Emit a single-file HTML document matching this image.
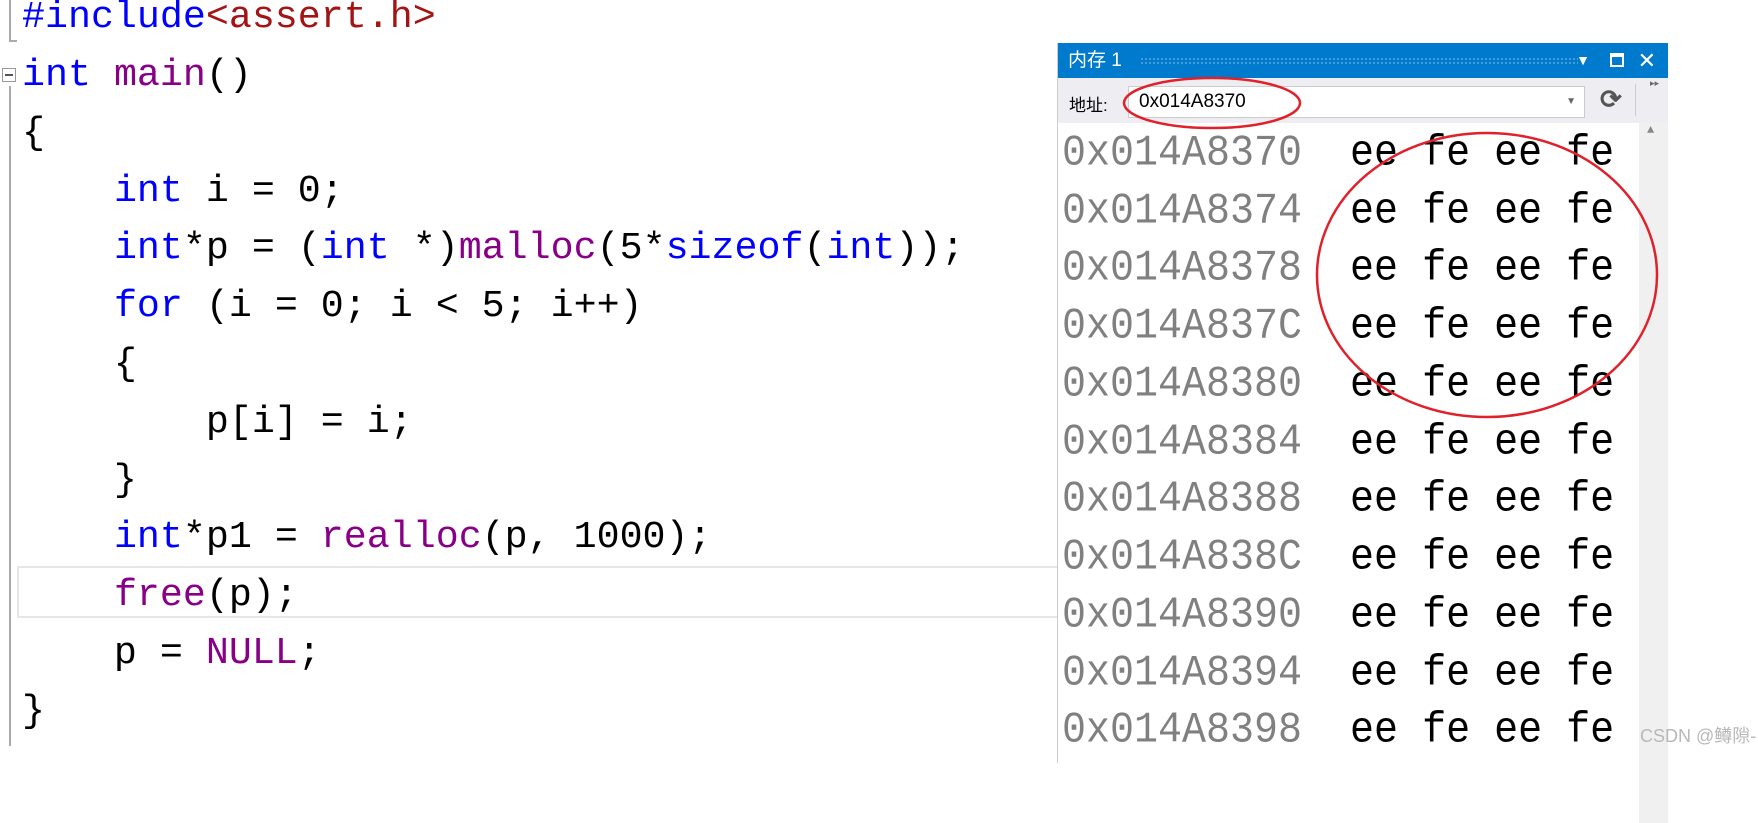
<!DOCTYPE html>
<html><head><meta charset="utf-8"><style>
body{margin:0;width:1758px;height:753px;overflow:hidden;background:#fff;position:relative;font-family:"Liberation Mono",monospace}
.l{position:absolute;left:22px;font-size:38.3px;line-height:58px;white-space:pre;color:#000}
.k{color:#0000ff}.f{color:#880088}.s{color:#a31515}
#win{position:absolute;left:1057px;top:43px;width:610px;height:720px;background:#fff;border-left:1px solid #ccc}
#tb{height:35px;background:#007acc;color:#fff;font-family:"Liberation Sans","Noto Sans CJK SC",sans-serif;font-size:19px;line-height:35px;padding-left:10px;position:relative}
#bar{height:45px;background:#eeeef2;position:relative;font-family:"Liberation Sans","Noto Sans CJK SC",sans-serif;font-size:17px}
.m{position:absolute;left:4px;font-size:40px;line-height:58px;white-space:pre;color:#000;transform:scaleY(1.08)}
.a{color:#808080}
</style></head><body>
<div style="position:absolute;left:9px;top:0;width:2px;height:40px;background:#aaa"></div>
<div style="position:absolute;left:9px;top:40px;width:8px;height:2px;background:#aaa"></div>
<div style="position:absolute;left:9px;top:86px;width:2px;height:660px;background:#aaa"></div>
<div style="position:absolute;left:2px;top:68px;width:12px;height:12px;border:1px solid #999;background:#fff"><div style="position:absolute;left:2px;top:5px;width:8px;height:2px;background:#555"></div></div>
<div style="position:absolute;left:17px;top:566px;width:1040px;height:52px;border:2px solid #e6e6e6;border-right:none;box-sizing:border-box"></div>
<div class="l" style="top:-12px"><span class="k">#include</span><span class="s">&lt;assert.h&gt;</span></div>
<div class="l" style="top:46px"><span class="k">int</span> <span class="f">main</span>()</div>
<div class="l" style="top:104px">{</div>
<div class="l" style="top:162px">    <span class="k">int</span> i = 0;</div>
<div class="l" style="top:219px">    <span class="k">int</span>*p = (<span class="k">int</span> *)<span class="f">malloc</span>(5*<span class="k">sizeof</span>(<span class="k">int</span>));</div>
<div class="l" style="top:277px">    <span class="k">for</span> (i = 0; i &lt; 5; i++)</div>
<div class="l" style="top:335px">    {</div>
<div class="l" style="top:393px">        p[i] = i;</div>
<div class="l" style="top:451px">    }</div>
<div class="l" style="top:508px">    <span class="k">int</span>*p1 = <span class="f">realloc</span>(p, 1000);</div>
<div class="l" style="top:566px">    <span class="f">free</span>(p);</div>
<div class="l" style="top:624px">    p = <span class="f">NULL</span>;</div>
<div class="l" style="top:682px">}</div>

<div id="win">
<div id="tb">内存 1
<div style="position:absolute;left:82px;right:90px;top:14px;height:8px;background-image:radial-gradient(#5aa8e0 1px,transparent 1px);background-size:4px 4px"></div>
<span style="position:absolute;right:78px;top:0;font-size:14px">▼</span>
<div style="position:absolute;right:44px;top:10px;width:14px;height:14px;border:2px solid #fff;border-top-width:4px;box-sizing:border-box"></div>
<span style="position:absolute;right:12px;top:0;font-size:22px">✕</span>
</div>
<div id="bar">
<span style="position:absolute;left:11px;top:13px">地址:</span>
<div style="position:absolute;left:70px;top:8px;width:457px;height:32px;background:#fff;border:1px solid #ccc;box-sizing:border-box;font-size:19px;line-height:30px;padding-left:10px">0x014A8370<span style="position:absolute;right:8px;top:0;font-size:10px;color:#666">▼</span></div>
<span style="position:absolute;left:542px;top:6px;font-size:26px;color:#555;font-weight:bold">⟳</span>
<div style="position:absolute;left:577px;top:6px;width:1px;height:32px;background:#ccc"></div>
<span style="position:absolute;left:592px;top:0;font-size:9px;color:#666">▸▸</span>
</div>
<div style="position:absolute;left:581px;top:80px;width:29px;height:700px;background:#f0f0f0"><span style="position:absolute;left:8px;top:0;font-size:12px;color:#888">▲</span></div>
<div style="position:absolute;left:0;top:80px;width:580px;height:640px;overflow:hidden">
<div class="m" style="top:3px"><span class="a">0x014A8370</span>  ee fe ee fe</div>
<div class="m" style="top:61px"><span class="a">0x014A8374</span>  ee fe ee fe</div>
<div class="m" style="top:118px"><span class="a">0x014A8378</span>  ee fe ee fe</div>
<div class="m" style="top:176px"><span class="a">0x014A837C</span>  ee fe ee fe</div>
<div class="m" style="top:234px"><span class="a">0x014A8380</span>  ee fe ee fe</div>
<div class="m" style="top:292px"><span class="a">0x014A8384</span>  ee fe ee fe</div>
<div class="m" style="top:349px"><span class="a">0x014A8388</span>  ee fe ee fe</div>
<div class="m" style="top:407px"><span class="a">0x014A838C</span>  ee fe ee fe</div>
<div class="m" style="top:465px"><span class="a">0x014A8390</span>  ee fe ee fe</div>
<div class="m" style="top:523px"><span class="a">0x014A8394</span>  ee fe ee fe</div>
<div class="m" style="top:580px"><span class="a">0x014A8398</span>  ee fe ee fe</div>
</div>
</div>
<svg style="position:absolute;left:0;top:0" width="1758" height="753">
<ellipse cx="1212" cy="103" rx="88" ry="25" fill="none" stroke="#e0202a" stroke-width="2.5"/>
<ellipse cx="1487" cy="275" rx="170" ry="142" fill="none" stroke="#e0202a" stroke-width="2.5"/>
</svg>
<div style="position:absolute;left:1640px;top:722px;white-space:nowrap;font-family:'Liberation Sans','Noto Sans CJK SC',sans-serif;font-size:18px;color:#b8b8b8">CSDN @鳟隙-</div>
</body></html>
